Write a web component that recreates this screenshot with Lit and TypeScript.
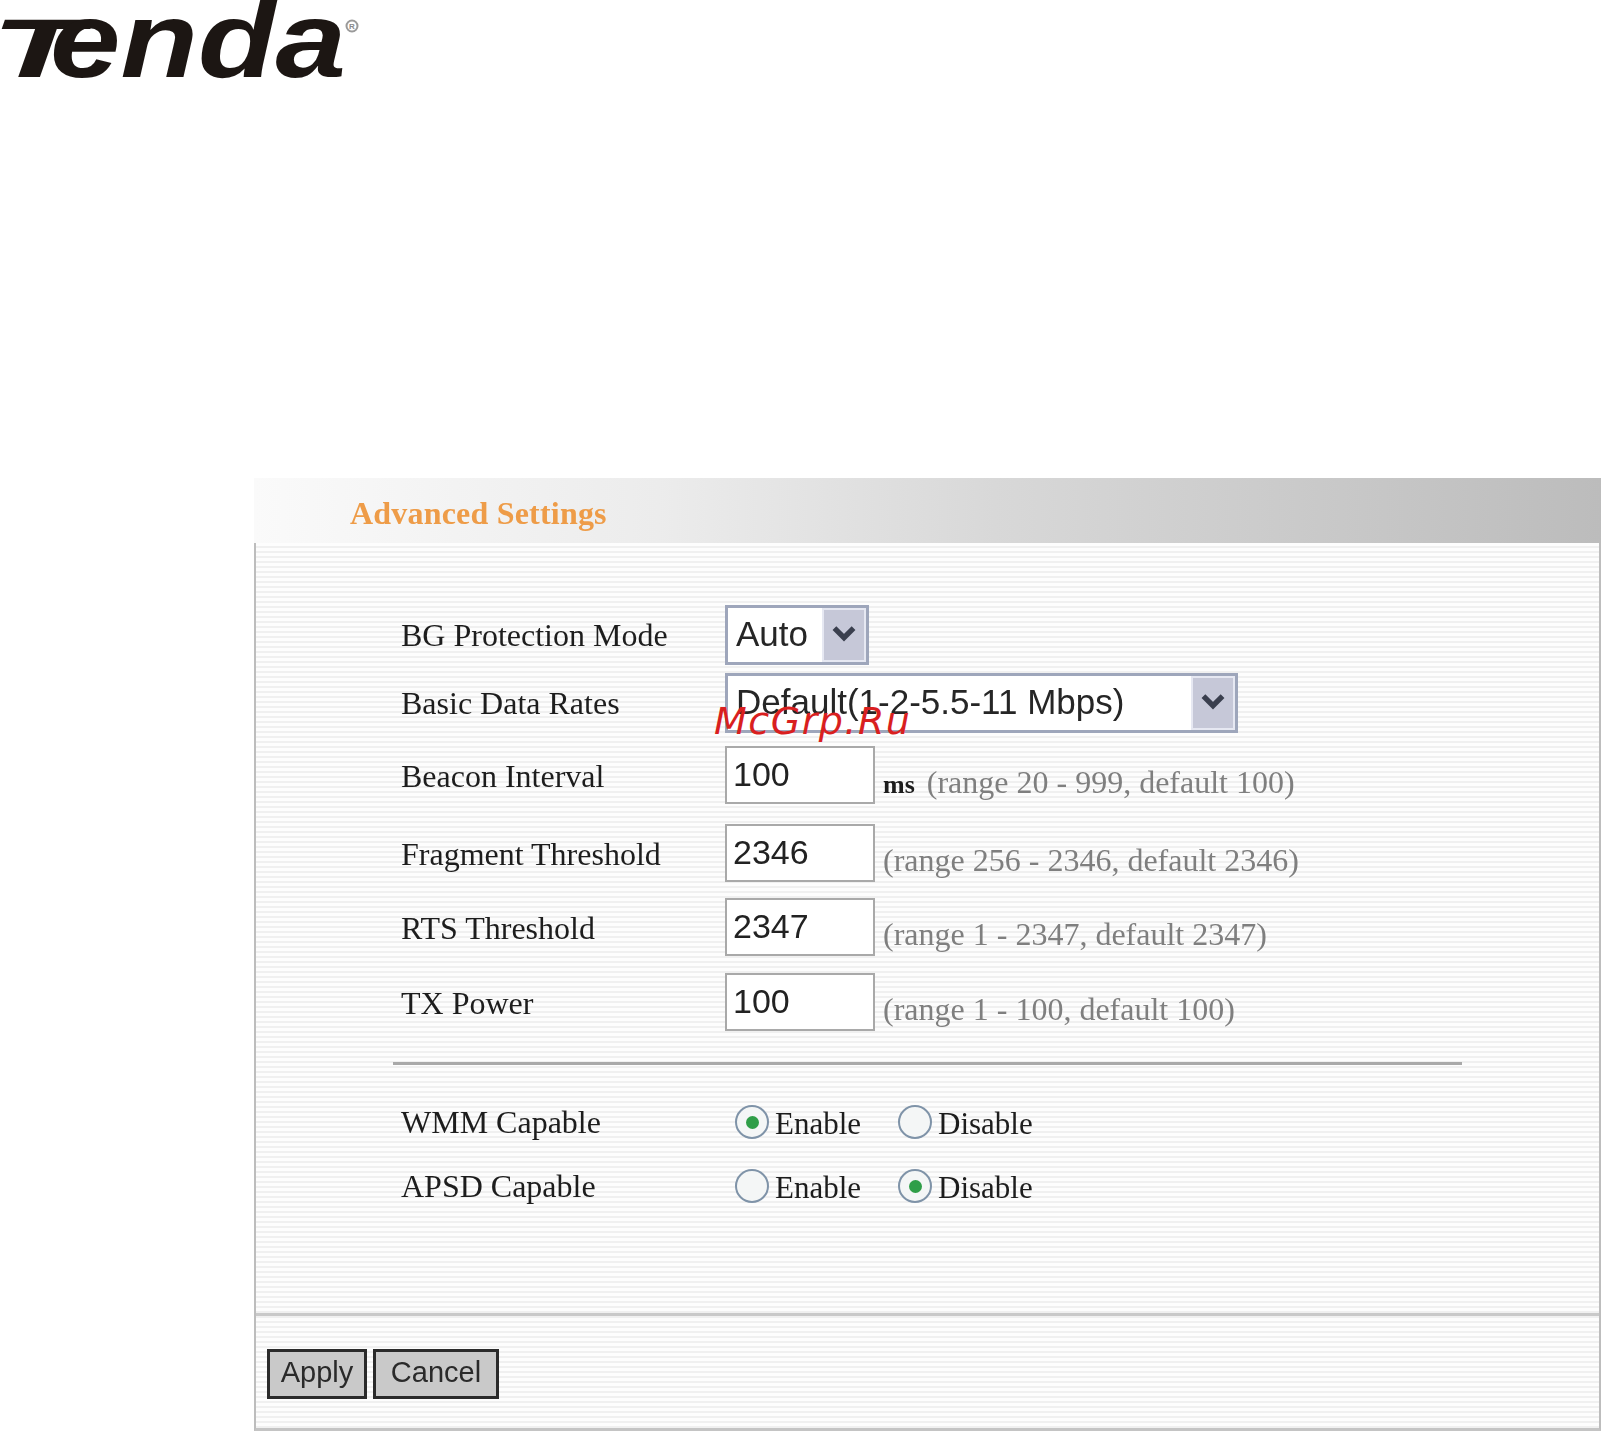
import { LitElement, html, css, svg } from "lit";
import { customElement } from "lit/decorators.js";

const chevron = html`<svg class="chev" viewBox="0 0 24 16" aria-hidden="true"><path d="M3 3 L12 12 L21 3" fill="none" stroke="#3a3f4e" stroke-width="5"/></svg>`;

const logoText = svg`
  <g fill="#1c1613" font-family="'Liberation Sans', sans-serif" font-weight="700" font-style="italic">
    <text x="-9" y="77" font-size="84" textLength="92" lengthAdjust="spacingAndGlyphs">T</text>
    <text x="50" y="77" font-size="108" textLength="296" lengthAdjust="spacingAndGlyphs">enda</text>
  </g>
  <circle cx="352" cy="26" r="5.5" fill="none" stroke="#9a9a9a" stroke-width="2"/>
  <text x="349" y="29" font-size="8" fill="#8a8a8a" font-family="'Liberation Sans', sans-serif" font-weight="700">R</text>`;

@customElement("app-root")
export class AppRoot extends LitElement {
  static styles = css`
    :host { display: block; position: relative; width: 1615px; height: 1438px; overflow: hidden; background: #fff; font-family: "Liberation Serif", "Times New Roman", serif; color: #1d1d1d; }
    .logo-area { height: 478px; }
    .logo { display: block; width: 370px; height: 80px; }
    .panel { width: 1347px; margin-left: 254px; filter: blur(0.55px); }
    .head { height: 65px; box-sizing: border-box; padding: 5px 0 0 96px; display: flex; align-items: center; font-size: 32px; font-weight: 700; color: #ee9c48; letter-spacing: 0.2px;
      background: linear-gradient(90deg, #fafafa 0%, #ececec 30%, #d8d8d8 55%, #bcbcbc 100%); }
    .body { border-left: 2px solid #bdbdbd; border-right: 2px solid #bdbdbd; border-bottom: 3px solid #c4c4c4;
      background: repeating-linear-gradient(180deg, #fdfdfd 0, #fdfdfd 3px, #f0f0f0 3px, #f0f0f0 5px); height: 885px; display: flex; flex-direction: column; }
    .main { height: 773px; box-sizing: border-box; padding: 62px 0 0 145px; border-bottom: 3px solid #c9c9c9; }
    .grid { display: grid; grid-template-columns: 324px 1fr; grid-template-rows: 68px 73px 78px 74px 75px 89px; }
    .lab { font-size: 32px; line-height: 60px; white-space: nowrap; }
    .ctrl { display: flex; align-items: flex-start; }
    .select { box-sizing: border-box; height: 60px; border: 3px solid #9ea6bb; background: #fff; display: flex; align-items: stretch; font-family: "Liberation Sans", Arial, sans-serif; font-size: 35px; color: #262626; }
    .select.s { width: 144px; }
    .select.l { width: 513px; }
    .select .val { flex: 1; padding-left: 8px; line-height: 52px; white-space: nowrap; }
    .select .btn { width: 44px; background: #c6c8d8; border: 2px solid #e6e8f2; display: flex; justify-content: center; padding-top: 15px; box-sizing: border-box; }
    .chev { width: 26px; height: 17px; }
    .input { box-sizing: border-box; width: 150px; height: 58px; border: 2px solid #a9a9a9; background: #fff; font-family: "Liberation Sans", Arial, sans-serif; font-size: 34px; line-height: 52px; padding-left: 6px; color: #222; }
    .hint { font-size: 32px; color: #7f7f7f; margin-left: 8px; margin-top: 16px; line-height: 40px; white-space: nowrap; }
    .hint b { color: #1d1d1d; font-size: 26px; margin-right: 4px; }
    .rule { width: 1069px; margin-left: -8px; height: 3px; background: #a9a9a9; margin-bottom: 25px; }
    .radios { display: flex; align-items: center; height: 64px; }
    .rgrid { display: grid; grid-template-columns: 324px 1fr; grid-template-rows: 64px 64px; }
    .rgrid .lab { line-height: 64px; margin-top: 0; }
    .opt { display: flex; align-items: center; width: 163px; padding-left: 10px; box-sizing: border-box; font-size: 31px; }
    .opt span { margin-left: 6px; margin-top: 3px; }
    .radio { width: 34px; height: 34px; border-radius: 50%; box-sizing: border-box; border: 2px solid #7f93a8; background: #f4f6f6; display: flex; align-items: center; justify-content: center; flex: none; }
    .radio.on::after { content: ""; width: 13px; height: 13px; border-radius: 50%; background: #2f9e48; }
    .foot { flex: 1; display: flex; align-items: flex-start; gap: 6px; padding: 33px 0 0 11px; }
    .b { box-sizing: border-box; height: 50px; border: 3px solid #2a2a2a; background: #c9c9c9; font-family: "Liberation Sans", Arial, sans-serif; font-size: 29px; line-height: 40px; text-align: center; color: #2a2a2a; }
    .b.a { width: 100px; }
    .b.c { width: 126px; }
    .mark { position: absolute; left: 714px; top: 696px; font-family: "DejaVu Sans", Verdana, sans-serif; font-style: italic; font-size: 38px; letter-spacing: 1.5px; line-height: 50px; color: #d91f1f; white-space: nowrap; }
  `;

  private row(label: string, ctrl: unknown) {
    return html`<div class="lab">${label}</div><div class="ctrl">${ctrl}</div>`;
  }

  private inp(v: string, hint: unknown) {
    return html`<div class="input">${v}</div><div class="hint">${hint}</div>`;
  }

  private radios(label: string, enableOn: boolean) {
    return html`<div class="lab">${label}</div>
      <div class="radios">
        <div class="opt"><i class="radio ${enableOn ? "on" : ""}"></i><span>Enable</span></div>
        <div class="opt"><i class="radio ${enableOn ? "" : "on"}"></i><span>Disable</span></div>
      </div>`;
  }

  render() {
    return html`
      <div class="logo-area"><svg class="logo" viewBox="0 0 370 80">${logoText}</svg></div>
      <section class="panel">
        <div class="head">Advanced Settings</div>
        <div class="body">
          <div class="main">
            <div class="grid">
              ${this.row("BG Protection Mode", html`<div class="select s"><div class="val">Auto</div><div class="btn">${chevron}</div></div>`)}
              ${this.row("Basic Data Rates", html`<div class="select l"><div class="val">Default(1-2-5.5-11 Mbps)</div><div class="btn">${chevron}</div></div>`)}
              ${this.row("Beacon Interval", this.inp("100", html`<b>ms</b> (range 20 - 999, default 100)`))}
              ${this.row("Fragment Threshold", this.inp("2346", "(range 256 - 2346, default 2346)"))}
              ${this.row("RTS Threshold", this.inp("2347", "(range 1 - 2347, default 2347)"))}
              ${this.row("TX Power", this.inp("100", "(range 1 - 100, default 100)"))}
            </div>
            <div class="rule"></div>
            <div class="rgrid">
              ${this.radios("WMM Capable", true)}
              ${this.radios("APSD Capable", false)}
            </div>
          </div>
          <div class="foot"><div class="b a">Apply</div><div class="b c">Cancel</div></div>
        </div>
      </section>
      <div class="mark">McGrp.Ru</div>
    `;
  }
}
